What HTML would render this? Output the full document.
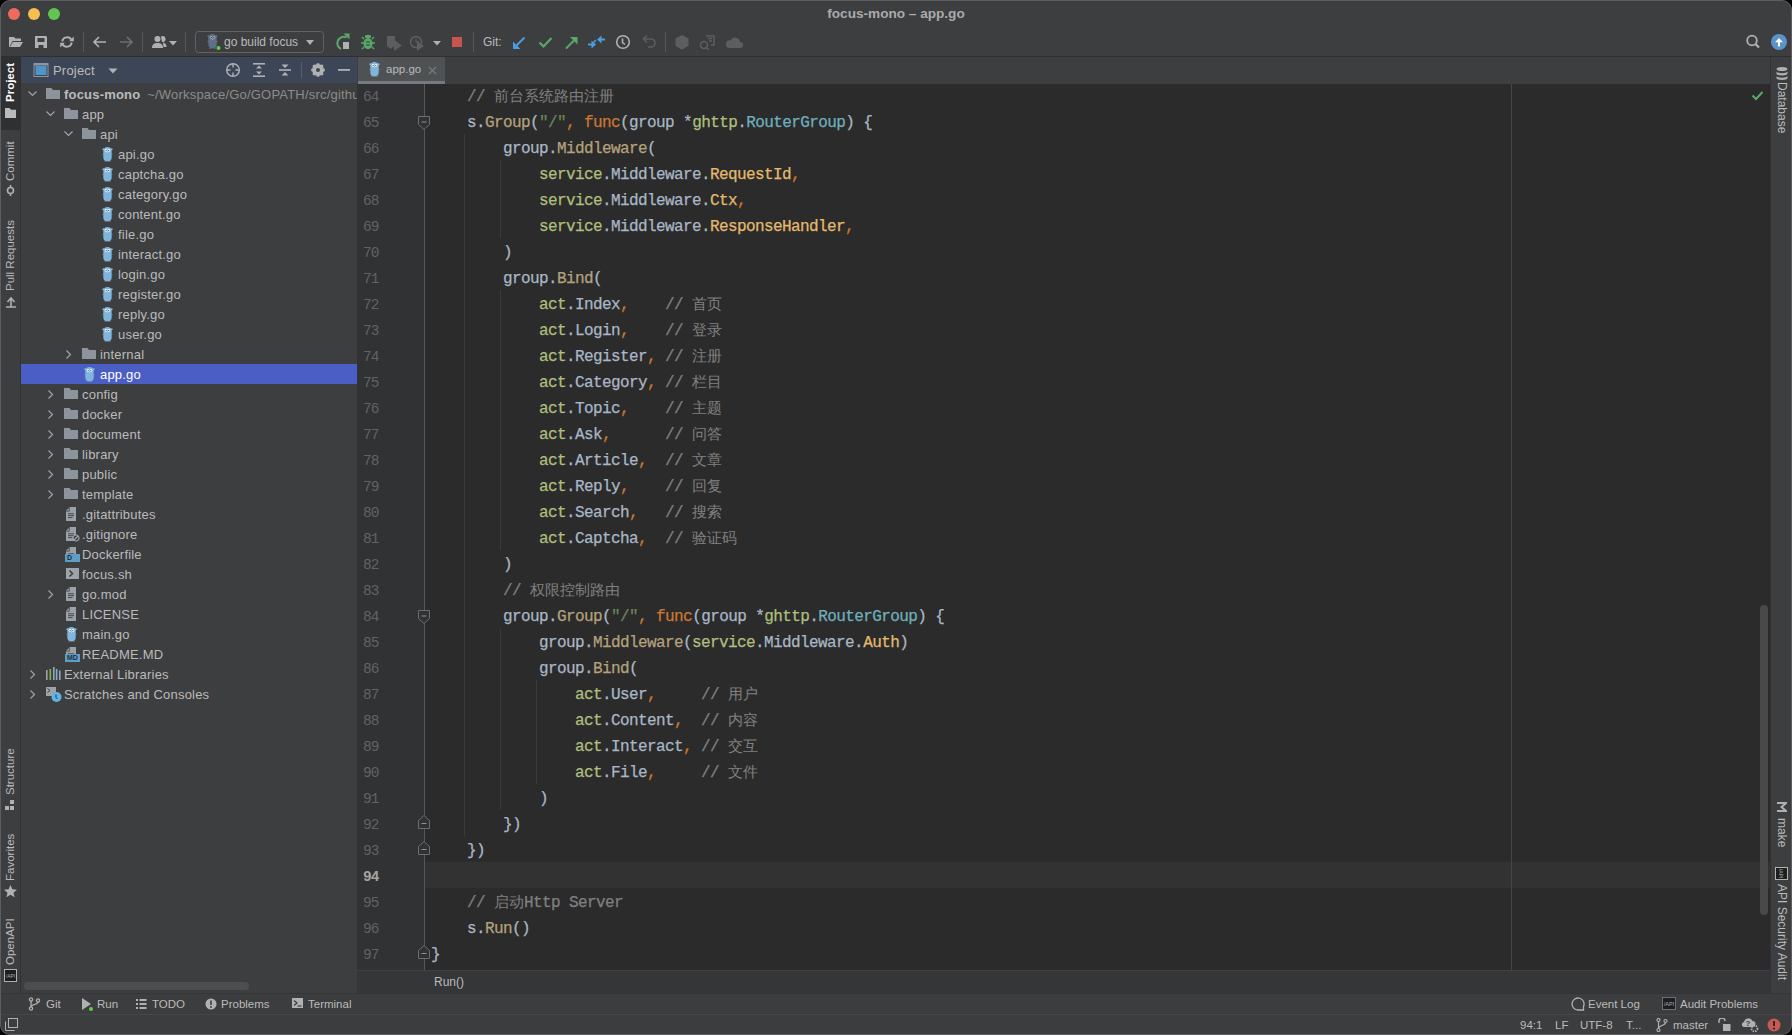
<!DOCTYPE html>
<html><head><meta charset="utf-8">
<style>
*{margin:0;padding:0;box-sizing:border-box}
html,body{width:1792px;height:1035px;overflow:hidden;background:#000}
body{font-family:"Liberation Sans",sans-serif;font-size:13px;color:#BBBBBB;position:relative}
.a{position:absolute}
#win{position:absolute;left:0;top:0;width:1792px;height:1035px;background:#3D3E40;border-radius:10px;overflow:hidden}
#title{left:0;top:0;width:1792px;height:28px;background:#3D3E40}
#tb{left:0;top:28px;width:1792px;height:29px;background:#3D3E40;border-bottom:1px solid #2E2F30}
#lstrip{left:0;top:57px;width:21px;height:937px;background:#3D3E40;border-right:1px solid #323232}
#rstrip{left:1770px;top:57px;width:22px;height:937px;background:#3D3E40;border-left:1px solid #323232}
#proj{left:21px;top:57px;width:336px;height:937px;background:#3D3E40}
#phead{left:21px;top:57px;width:336px;height:26px;background:#3D4656}
#tabs{left:357px;top:57px;width:1413px;height:27px;background:#3D3E40}
#gutter{left:357px;top:84px;width:68px;height:886px;background:#313234}
#editor{left:425px;top:84px;width:1345px;height:886px;background:#2B2B2B}
#crumb{left:357px;top:970px;width:1413px;height:23px;background:#343638;border-top:1px solid #3F4143}
#bbar{left:0;top:993px;width:1792px;height:21px;background:#3C3D3F;border-top:1px solid #343536}
#sbar{left:0;top:1014px;width:1792px;height:21px;background:#3C3D3F;border-top:1px solid #46474A}
.cjk{font-size:15px;-webkit-text-stroke:0;letter-spacing:0}
.code{font-family:"Liberation Mono",monospace;font-size:16px;letter-spacing:-0.6px;-webkit-text-stroke:0.25px currentColor;white-space:pre;color:#A9B7C6}
</style></head><body>
<svg width="0" height="0" style="position:absolute">
<defs>
<symbol id="folder" viewBox="0 0 14 11"><path d="M0 0h5.5l1.5 2H14v9H0z" fill="#8D949B"/></symbol>
<symbol id="gopher" viewBox="0 0 11 15">
<path d="M1.3 4C1.3 1.5 3.2 0 5.5 0S9.7 1.5 9.7 4V10.5C9.7 13.3 7.9 14.6 5.5 14.6S1.3 13.3 1.3 10.5z" fill="#7FB6E0"/>
<circle cx="1.4" cy="2.3" r="1.1" fill="#7FB6E0"/><circle cx="9.6" cy="2.3" r="1.1" fill="#7FB6E0"/>
<circle cx="4" cy="3.4" r="1.3" fill="#F0F4F8"/><circle cx="7" cy="3.4" r="1.3" fill="#F0F4F8"/>
<circle cx="4.2" cy="3.5" r=".55" fill="#333"/><circle cx="6.8" cy="3.5" r=".55" fill="#333"/>
<path d="M4.6 5h1.8l-.9.9z" fill="#D8C0A0"/>
<path d="M.6 7.5h.8M9.6 7.5h.8M2.6 14.6h.9M7.5 14.6h.9" stroke="#C98D5A" stroke-width=".8"/>
</symbol><symbol id="gopherdark" viewBox="0 0 11 15">
<path d="M1.3 4C1.3 1.5 3.2 0 5.5 0S9.7 1.5 9.7 4V10.5C9.7 13.3 7.9 14.6 5.5 14.6S1.3 13.3 1.3 10.5z" fill="#5E7088"/>
<circle cx="1.4" cy="2.3" r="1.1" fill="#5E7088"/><circle cx="9.6" cy="2.3" r="1.1" fill="#5E7088"/>
<circle cx="4" cy="3.4" r="1.3" fill="#9AA5B0"/><circle cx="7" cy="3.4" r="1.3" fill="#9AA5B0"/>
<circle cx="4.2" cy="3.5" r=".55" fill="#333"/><circle cx="6.8" cy="3.5" r=".55" fill="#333"/>
<path d="M4.6 5h1.8l-.9.9z" fill="#D8C0A0"/>
<path d="M.6 7.5h.8M9.6 7.5h.8M2.6 14.6h.9M7.5 14.6h.9" stroke="#C98D5A" stroke-width=".8"/>
</symbol>
<symbol id="chevd" viewBox="0 0 9 6"><path d="M.5 .5l4 4 4-4" fill="none" stroke="#A0A2A4" stroke-width="1.2"/></symbol>
<symbol id="chevr" viewBox="0 0 6 9"><path d="M.5 .5l4 4-4 4" fill="none" stroke="#A0A2A4" stroke-width="1.2"/></symbol>
<symbol id="textfile" viewBox="0 0 12 14"><path d="M4.6 0H11V14H1V4.6H4.6z" fill="#9AA1A8"/><path d="M1 3.8L3.8 1V3.8z" fill="#9AA1A8"/><path d="M3 6.8h6M3 8.7h6M3 10.6h4.5" stroke="#3D3E40" stroke-width=".9"/></symbol>
</defs></svg>

<div id="win">
<div class="a" id="title"></div>
<div class="a" id="tb"></div>
<div class="a" style="left:0;top:0;width:1792px;height:28px;text-align:center;line-height:28px;font-weight:bold;font-size:13.6px;color:#ABABAB">focus-mono – app.go</div>
<svg class="a" style="left:0;top:0" width="80" height="28">
<circle cx="14" cy="14" r="6" fill="#EC6A5E"/><circle cx="34" cy="14" r="6" fill="#F4BF4F"/><circle cx="54" cy="14" r="6" fill="#61C554"/>
</svg>
<svg class="a" style="left:0;top:28px" width="800" height="28">
<g fill="#AFB1B3">
<!-- open folder -->
<path d="M9 9h5l1.5 1.5H21V13H12.5L9.5 19H9z"/><path d="M12.8 14H23l-3 5H10z"/>
<!-- save -->
<path d="M35 8h11l1 1v11H35z M37.5 10v4h7v-4z M38.5 17h5v3h-5z" fill-rule="evenodd"/>
<!-- sync -->
</g>
<g fill="none" stroke="#AFB1B3" stroke-width="1.8"><path d="M62.2 13.5A5 5 0 0 1 71.5 11.8"/><path d="M71.8 14.5A5 5 0 0 1 62.5 16.2"/></g>
<g fill="#AFB1B3"><path d="M69.2 13.2h4.6V8.6z"/><path d="M64.8 14.8h-4.6v4.6z"/></g>
<g stroke="#555759" stroke-width="1"><path d="M83.5 4v20M142.5 4v20M185.5 4v20M473.5 4v20M665.5 4v20"/></g>
<!-- back/forward -->
<g fill="none" stroke="#AFB1B3" stroke-width="1.7"><path d="M94 14h12M99 9l-5 5 5 5"/></g>
<g fill="none" stroke="#6E6E6E" stroke-width="1.7"><path d="M120 14h12M127 9l5 5-5 5"/></g>
<!-- user -->
<g fill="#AFB1B3"><circle cx="157.5" cy="11" r="3"/><path d="M152 20c0-4 2.5-5 5.5-5s5.5 1 5.5 5z"/><path d="M161 8.5a3 3 0 1 1 1 5.5 M163 14.5c2 .5 3.5 1.5 3.5 4.5h-3"/><path d="M169 13h8l-4 4.5z"/></g>
<!-- run config box -->
<rect x="195.5" y="3.5" width="128" height="21" rx="3" fill="none" stroke="#606263"/>
<svg x="207" y="6" width="11" height="15" viewBox="0 0 11 15"><use href="#gopherdark"/></svg><circle cx="218.5" cy="20" r="2" fill="#5FD34A"/>
<path d="M306 12h8l-4 5z" fill="#AFB1B3"/>
<!-- rerun -->
<path d="M346.5 9.5A6 6 0 1 0 341 21" stroke="#59A869" stroke-width="2" fill="none"/><path d="M343.5 5.5h6v6z" fill="#59A869"/><rect x="343" y="14" width="6" height="7" fill="#AFB1B3"/>
<!-- debug -->
<g fill="#59A869"><ellipse cx="368" cy="15.5" rx="4.5" ry="5.5"/><path d="M362 9l2 2M374 9l-2 2M361 15h3M372 15h3M362 21l2-2M374 21l-2-2" stroke="#59A869" stroke-width="1.5"/><rect x="365" y="7" width="6" height="3" rx="1"/></g>
<path d="M366 14h4M366 17h4" stroke="#3D3E40" stroke-width="1"/>
<!-- coverage -->
<g fill="#5C5E60"><path d="M387 8h8v9l-4 4-4-3z"/><path d="M394 12l8 5.5-8 5.5z"/></g>
<!-- profile -->
<g fill="none" stroke="#5C5E60" stroke-width="1.6"><circle cx="416" cy="14" r="5.5"/></g><path d="M416 10v4h3" stroke="#5C5E60" fill="none"/><path d="M417 13l7 5-7 5z" fill="#5C5E60"/>
<path d="M433 13h8l-4 4.5z" fill="#AFB1B3"/>
<!-- stop -->
<rect x="452" y="9" width="10" height="10" fill="#C75450"/>

<!-- update -->
<path d="M524.5 9.5L515 19" stroke="#4D9BE0" stroke-width="2" fill="none"/><path d="M513 13.5V21h7.5z" fill="#4D9BE0"/>
<!-- commit -->
<path d="M539.5 14.5l4 4 8-8.5" stroke="#59A869" stroke-width="2.2" fill="none"/>
<!-- push -->
<path d="M566 20.5L575.5 11" stroke="#59A869" stroke-width="2" fill="none"/><path d="M570 9h7.5v7.5z" fill="#59A869"/>
<!-- merge -->
<g fill="#4D9BE0"><path d="M597 11.5l4.5-4v3h3.5v2h-3.5v3z"/><path d="M596 16.5l-4.5 4v-3H588v-2h3.5v-3z"/><path d="M596 12l-2.5 2.5M600 15.5" stroke="#4D9BE0" stroke-width="1.6"/></g>
<!-- history -->
<circle cx="623" cy="14" r="6.3" fill="none" stroke="#AFB1B3" stroke-width="1.6"/><path d="M622.5 10.5v4l2.5 2" stroke="#AFB1B3" stroke-width="1.6" fill="none"/>
<!-- rollback -->
<path d="M645 11h6a4 4 0 0 1 0 8h-3" stroke="#5C5E60" stroke-width="1.6" fill="none"/><path d="M647 7.5l-3.5 3.5 3.5 3.5" stroke="#5C5E60" stroke-width="1.6" fill="none"/>
<!-- hexagon -->
<path d="M682 7l6.5 3.5v7.5L682 21.5 675.5 18v-7.5z" fill="#5C5E60"/>
<!-- search in -->
<g stroke="#5C5E60" stroke-width="1.5" fill="none"><circle cx="704" cy="17" r="3.5"/><path d="M706.5 19.5l2.5 2.5"/><path d="M706 8h8v9h-3M708 10.5h4M709 13h3"/></g>
<!-- cloud -->
<path d="M729 20h11a3 3 0 0 0 0-6 5 5 0 0 0-9.5-1.5A3.8 3.8 0 0 0 729 20z" fill="#5C5E60"/>
</svg>
<div class="a" style="left:224px;top:28px;height:28px;line-height:28px;font-size:12px;color:#BBBBBB">go build focus</div>
<div class="a" style="left:483px;top:28px;height:28px;line-height:28px;font-size:12px;color:#BBBBBB">Git:</div>



<svg class="a" style="left:1740px;top:28px" width="52" height="28">
<circle cx="12" cy="12.5" r="4.8" fill="none" stroke="#AFB1B3" stroke-width="1.8"/><path d="M15.5 16l3.5 3.5" stroke="#AFB1B3" stroke-width="2.2"/>
<circle cx="39" cy="14" r="8" fill="#5B93C9"/><path d="M39 18.5v-5" stroke="#fff" stroke-width="2"/><path d="M35 14.2l4-4.2 4 4.2z" fill="#fff"/>
</svg>
<div class="a" id="lstrip"></div><div class="a" style="left:1px;top:57px;width:20px;height:73px;background:#2E3032"></div>
<div style="font-size:11.5px;color:#BBBBBB;white-space:nowrap;position:absolute;transform-origin:0 0;left:3px;top:102px;transform:rotate(-90deg);line-height:15px;height:15px;font-weight:bold;color:#FFFFFF">Project</div>
<svg class="a" style="left:5px;top:108px" width="12" height="11"><path d="M0 0h4.5l1.5 1.8H11V10H0z" fill="#BBBBBB"/></svg>
<div style="font-size:11.5px;color:#BBBBBB;white-space:nowrap;position:absolute;transform-origin:0 0;left:3px;top:181px;transform:rotate(-90deg);line-height:15px;height:15px;font-weight:normal;color:#BBBBBB">Commit</div>
<svg class="a" style="left:4px;top:185px" width="13" height="11"><circle cx="6.5" cy="5.5" r="3" fill="none" stroke="#AFB1B3" stroke-width="1.6"/><path d="M6.5 0v2.5M6.5 8.5V11" stroke="#AFB1B3" stroke-width="1.6"/></svg>
<div style="font-size:11.5px;color:#BBBBBB;white-space:nowrap;position:absolute;transform-origin:0 0;left:3px;top:291px;transform:rotate(-90deg);line-height:15px;height:15px;font-weight:normal;color:#BBBBBB">Pull Requests</div>
<svg class="a" style="left:5px;top:296px" width="12" height="12"><path d="M1 1v10M1 6h9M6 2.5L10 6 6 9.5" stroke="#AFB1B3" stroke-width="1.6" fill="none" transform="rotate(-90 6 6)"/></svg>
<div style="font-size:11.5px;color:#BBBBBB;white-space:nowrap;position:absolute;transform-origin:0 0;left:3px;top:795px;transform:rotate(-90deg);line-height:15px;height:15px;font-weight:normal;color:#BBBBBB">Structure</div>
<svg class="a" style="left:5px;top:800px" width="11" height="11"><rect x="5" y="0" width="4" height="4" fill="#AFB1B3"/><rect x="0" y="6" width="4" height="4" fill="#AFB1B3"/><rect x="5" y="6" width="4" height="4" fill="#AFB1B3"/></svg>
<div style="font-size:11.5px;color:#BBBBBB;white-space:nowrap;position:absolute;transform-origin:0 0;left:3px;top:881px;transform:rotate(-90deg);line-height:15px;height:15px;font-weight:normal;color:#BBBBBB">Favorites</div>
<svg class="a" style="left:4px;top:885px" width="13" height="13"><path d="M6.5 0l1.9 4.3 4.6.4-3.5 3 1.1 4.6-4.1-2.5-4.1 2.5 1.1-4.6-3.5-3 4.6-.4z" fill="#AFB1B3"/></svg>
<div style="font-size:11.5px;color:#BBBBBB;white-space:nowrap;position:absolute;transform-origin:0 0;left:3px;top:965px;transform:rotate(-90deg);line-height:15px;height:15px;font-weight:normal;color:#BBBBBB">OpenAPI</div>
<svg class="a" style="left:4px;top:969px" width="13" height="13"><rect x=".5" y=".5" width="12" height="12" fill="#1E1E1E" stroke="#AFB1B3"/><text x="6.5" y="9" font-size="5" fill="#AFB1B3" text-anchor="middle" font-family="Liberation Sans">/API</text></svg>
<div class="a" id="proj"></div>
<div class="a" id="phead"></div><div class="a" style="left:24px;top:982px;width:225px;height:8px;border-radius:4px;background:#4C4E50"></div>
<svg class="a" style="left:21px;top:57px" width="336" height="26">
<rect x="13" y="6.5" width="14" height="13" fill="none" stroke="#8B96A3" stroke-width="1"/><rect x="14.5" y="9" width="11" height="9" fill="#4D94C7"/><rect x="13" y="6.5" width="14" height="2" fill="#8B96A3"/>
<path d="M87.5 11.5h9l-4.5 5z" fill="#AFB1B3"/>
<g fill="none" stroke="#AFB1B3" stroke-width="1.4"><circle cx="212" cy="13" r="6.3"/><path d="M212 6.5v4M212 15.5v4M205.5 13h4M214.5 13h4"/></g>
<g fill="#AFB1B3"><rect x="232" y="6" width="12" height="1.6"/><rect x="232" y="18.4" width="12" height="1.6"/><path d="M238 8.5l3 3h-6z M238 17.5l3-3h-6z"/></g>
<g fill="#AFB1B3"><rect x="258" y="12.2" width="12" height="1.6"/><path d="M264 11l-3.5-3.5h7z M264 15l-3.5 3.5h7z"/></g>
<path d="M280.5 5v16" stroke="#55606C"/>
<g transform="translate(297 13)"><circle r="4.5" fill="none" stroke="#AFB1B3" stroke-width="3"/><g stroke="#AFB1B3" stroke-width="2.6"><path d="M0-6.8v13.6M-6.8 0h13.6M-4.8-4.8l9.6 9.6M4.8-4.8l-9.6 9.6"/></g><circle r="2" fill="#3E4654"/></g>
<rect x="317" y="12" width="12" height="1.8" fill="#AFB1B3"/>
</svg>
<div class="a" style="left:53px;top:58px;height:26px;line-height:26px;font-size:13px;letter-spacing:.2px;color:#BBBBBB">Project</div>
<div class="a" style="left:21px;top:83px;width:336px;height:910px;overflow:hidden"><div class="a" style="left:-21px;top:-83px;width:400px;height:1000px"><svg class="a" style="left:28px;top:91px" width="9" height="6"><use href="#chevd"/></svg>
<svg class="a" style="left:46px;top:88px" width="14" height="11"><use href="#folder"/></svg>
<div class="a" style="left:64px;top:85px;height:20px;line-height:20px;font-size:13px;letter-spacing:.2px;color:#BBBBBB;font-weight:bold;white-space:nowrap">focus-mono<span style="font-weight:normal;color:#8C8C8C;margin-left:3px"> ~/Workspace/Go/GOPATH/src/github.com/gogf/focus</span></div>
<svg class="a" style="left:46px;top:111px" width="9" height="6"><use href="#chevd"/></svg>
<svg class="a" style="left:64px;top:108px" width="14" height="11"><use href="#folder"/></svg>
<div class="a" style="left:82px;top:105px;height:20px;line-height:20px;font-size:13px;letter-spacing:.2px;color:#BBBBBB;font-weight:normal;white-space:nowrap">app</div>
<svg class="a" style="left:64px;top:131px" width="9" height="6"><use href="#chevd"/></svg>
<svg class="a" style="left:82px;top:128px" width="14" height="11"><use href="#folder"/></svg>
<div class="a" style="left:100px;top:125px;height:20px;line-height:20px;font-size:13px;letter-spacing:.2px;color:#BBBBBB;font-weight:normal;white-space:nowrap">api</div>
<svg class="a" style="left:102px;top:147px" width="11" height="15"><use href="#gopher"/></svg>
<div class="a" style="left:118px;top:145px;height:20px;line-height:20px;font-size:13px;letter-spacing:.2px;color:#BBBBBB;font-weight:normal;white-space:nowrap">api.go</div>
<svg class="a" style="left:102px;top:167px" width="11" height="15"><use href="#gopher"/></svg>
<div class="a" style="left:118px;top:165px;height:20px;line-height:20px;font-size:13px;letter-spacing:.2px;color:#BBBBBB;font-weight:normal;white-space:nowrap">captcha.go</div>
<svg class="a" style="left:102px;top:187px" width="11" height="15"><use href="#gopher"/></svg>
<div class="a" style="left:118px;top:185px;height:20px;line-height:20px;font-size:13px;letter-spacing:.2px;color:#BBBBBB;font-weight:normal;white-space:nowrap">category.go</div>
<svg class="a" style="left:102px;top:207px" width="11" height="15"><use href="#gopher"/></svg>
<div class="a" style="left:118px;top:205px;height:20px;line-height:20px;font-size:13px;letter-spacing:.2px;color:#BBBBBB;font-weight:normal;white-space:nowrap">content.go</div>
<svg class="a" style="left:102px;top:227px" width="11" height="15"><use href="#gopher"/></svg>
<div class="a" style="left:118px;top:225px;height:20px;line-height:20px;font-size:13px;letter-spacing:.2px;color:#BBBBBB;font-weight:normal;white-space:nowrap">file.go</div>
<svg class="a" style="left:102px;top:247px" width="11" height="15"><use href="#gopher"/></svg>
<div class="a" style="left:118px;top:245px;height:20px;line-height:20px;font-size:13px;letter-spacing:.2px;color:#BBBBBB;font-weight:normal;white-space:nowrap">interact.go</div>
<svg class="a" style="left:102px;top:267px" width="11" height="15"><use href="#gopher"/></svg>
<div class="a" style="left:118px;top:265px;height:20px;line-height:20px;font-size:13px;letter-spacing:.2px;color:#BBBBBB;font-weight:normal;white-space:nowrap">login.go</div>
<svg class="a" style="left:102px;top:287px" width="11" height="15"><use href="#gopher"/></svg>
<div class="a" style="left:118px;top:285px;height:20px;line-height:20px;font-size:13px;letter-spacing:.2px;color:#BBBBBB;font-weight:normal;white-space:nowrap">register.go</div>
<svg class="a" style="left:102px;top:307px" width="11" height="15"><use href="#gopher"/></svg>
<div class="a" style="left:118px;top:305px;height:20px;line-height:20px;font-size:13px;letter-spacing:.2px;color:#BBBBBB;font-weight:normal;white-space:nowrap">reply.go</div>
<svg class="a" style="left:102px;top:327px" width="11" height="15"><use href="#gopher"/></svg>
<div class="a" style="left:118px;top:325px;height:20px;line-height:20px;font-size:13px;letter-spacing:.2px;color:#BBBBBB;font-weight:normal;white-space:nowrap">user.go</div>
<svg class="a" style="left:66px;top:350px" width="6" height="9"><use href="#chevr"/></svg>
<svg class="a" style="left:82px;top:348px" width="14" height="11"><use href="#folder"/></svg>
<div class="a" style="left:100px;top:345px;height:20px;line-height:20px;font-size:13px;letter-spacing:.2px;color:#BBBBBB;font-weight:normal;white-space:nowrap">internal</div>
<div class="a" style="left:21px;top:364px;width:336px;height:20px;background:#4B5EC6"></div>
<svg class="a" style="left:84px;top:367px" width="11" height="15"><use href="#gopher"/></svg>
<div class="a" style="left:100px;top:365px;height:20px;line-height:20px;font-size:13px;letter-spacing:.2px;color:#FFFFFF;font-weight:normal;white-space:nowrap">app.go</div>
<svg class="a" style="left:48px;top:390px" width="6" height="9"><use href="#chevr"/></svg>
<svg class="a" style="left:64px;top:388px" width="14" height="11"><use href="#folder"/></svg>
<div class="a" style="left:82px;top:385px;height:20px;line-height:20px;font-size:13px;letter-spacing:.2px;color:#BBBBBB;font-weight:normal;white-space:nowrap">config</div>
<svg class="a" style="left:48px;top:410px" width="6" height="9"><use href="#chevr"/></svg>
<svg class="a" style="left:64px;top:408px" width="14" height="11"><use href="#folder"/></svg>
<div class="a" style="left:82px;top:405px;height:20px;line-height:20px;font-size:13px;letter-spacing:.2px;color:#BBBBBB;font-weight:normal;white-space:nowrap">docker</div>
<svg class="a" style="left:48px;top:430px" width="6" height="9"><use href="#chevr"/></svg>
<svg class="a" style="left:64px;top:428px" width="14" height="11"><use href="#folder"/></svg>
<div class="a" style="left:82px;top:425px;height:20px;line-height:20px;font-size:13px;letter-spacing:.2px;color:#BBBBBB;font-weight:normal;white-space:nowrap">document</div>
<svg class="a" style="left:48px;top:450px" width="6" height="9"><use href="#chevr"/></svg>
<svg class="a" style="left:64px;top:448px" width="14" height="11"><use href="#folder"/></svg>
<div class="a" style="left:82px;top:445px;height:20px;line-height:20px;font-size:13px;letter-spacing:.2px;color:#BBBBBB;font-weight:normal;white-space:nowrap">library</div>
<svg class="a" style="left:48px;top:470px" width="6" height="9"><use href="#chevr"/></svg>
<svg class="a" style="left:64px;top:468px" width="14" height="11"><use href="#folder"/></svg>
<div class="a" style="left:82px;top:465px;height:20px;line-height:20px;font-size:13px;letter-spacing:.2px;color:#BBBBBB;font-weight:normal;white-space:nowrap">public</div>
<svg class="a" style="left:48px;top:490px" width="6" height="9"><use href="#chevr"/></svg>
<svg class="a" style="left:64px;top:488px" width="14" height="11"><use href="#folder"/></svg>
<div class="a" style="left:82px;top:485px;height:20px;line-height:20px;font-size:13px;letter-spacing:.2px;color:#BBBBBB;font-weight:normal;white-space:nowrap">template</div>
<svg class="a" style="left:65px;top:507px" width="12" height="14"><use href="#textfile"/></svg>
<div class="a" style="left:82px;top:505px;height:20px;line-height:20px;font-size:13px;letter-spacing:.2px;color:#BBBBBB;font-weight:normal;white-space:nowrap">.gitattributes</div>
<svg class="a" style="left:65px;top:527px" width="12" height="14"><use href="#textfile"/></svg>
<svg class="a" style="left:72px;top:534px" width="8" height="8"><circle cx="4" cy="4" r="3" fill="#3D3E40" stroke="#9DA3A8" stroke-width="1.2"/><path d="M2 6l4-4" stroke="#9DA3A8" stroke-width="1.2"/></svg>
<div class="a" style="left:82px;top:525px;height:20px;line-height:20px;font-size:13px;letter-spacing:.2px;color:#BBBBBB;font-weight:normal;white-space:nowrap">.gitignore</div>
<svg class="a" style="left:65px;top:547px" width="12" height="14"><use href="#textfile"/></svg>
<div class="a" style="left:65px;top:554px;width:15px;height:8px;background:#5F9CC6;color:#1F2F3A;font-size:7px;line-height:8px;font-weight:bold;padding-left:2px">D</div>
<div class="a" style="left:82px;top:545px;height:20px;line-height:20px;font-size:13px;letter-spacing:.2px;color:#BBBBBB;font-weight:normal;white-space:nowrap">Dockerfile</div>
<svg class="a" style="left:66px;top:568px" width="14" height="12"><rect width="13" height="11" fill="#9DA3A8"/><path d="M3.5 2.5l3 3-3 3" stroke="#3D3E40" stroke-width="1.5" fill="none"/></svg>
<div class="a" style="left:82px;top:565px;height:20px;line-height:20px;font-size:13px;letter-spacing:.2px;color:#BBBBBB;font-weight:normal;white-space:nowrap">focus.sh</div>
<svg class="a" style="left:48px;top:590px" width="6" height="9"><use href="#chevr"/></svg>
<svg class="a" style="left:65px;top:587px" width="12" height="14"><use href="#textfile"/></svg>
<div class="a" style="left:82px;top:585px;height:20px;line-height:20px;font-size:13px;letter-spacing:.2px;color:#BBBBBB;font-weight:normal;white-space:nowrap">go.mod</div>
<svg class="a" style="left:65px;top:607px" width="12" height="14"><use href="#textfile"/></svg>
<div class="a" style="left:82px;top:605px;height:20px;line-height:20px;font-size:13px;letter-spacing:.2px;color:#BBBBBB;font-weight:normal;white-space:nowrap">LICENSE</div>
<svg class="a" style="left:66px;top:627px" width="11" height="15"><use href="#gopher"/></svg>
<div class="a" style="left:82px;top:625px;height:20px;line-height:20px;font-size:13px;letter-spacing:.2px;color:#BBBBBB;font-weight:normal;white-space:nowrap">main.go</div>
<svg class="a" style="left:65px;top:647px" width="12" height="14"><use href="#textfile"/></svg>
<div class="a" style="left:65px;top:654px;width:15px;height:8px;background:#5F9CC6;color:#1F2F3A;font-size:7px;line-height:8px;font-weight:bold;padding-left:2px">MD</div>
<div class="a" style="left:82px;top:645px;height:20px;line-height:20px;font-size:13px;letter-spacing:.2px;color:#BBBBBB;font-weight:normal;white-space:nowrap">README.MD</div>
<svg class="a" style="left:30px;top:670px" width="6" height="9"><use href="#chevr"/></svg>
<svg class="a" style="left:46px;top:667px" width="15" height="13"><rect x="0" y="3" width="1.6" height="10" fill="#9DA3A8"/><rect x="3.5" y="2" width="1.6" height="11" fill="#78B848"/><rect x="7" y="0" width="1.6" height="13" fill="#9DA3A8"/><rect x="9.8" y="2" width="1.6" height="11" fill="#6EB3E5"/><rect x="13" y="3.5" width="1.6" height="9.5" fill="#9DA3A8"/></svg>
<div class="a" style="left:64px;top:665px;height:20px;line-height:20px;font-size:13px;letter-spacing:.2px;color:#BBBBBB;font-weight:normal;white-space:nowrap">External Libraries</div>
<svg class="a" style="left:30px;top:690px" width="6" height="9"><use href="#chevr"/></svg>
<svg class="a" style="left:46px;top:687px" width="16" height="16"><rect x="0" y="0" width="10" height="9" fill="#9DA3A8"/><path d="M1.5 1.5l2.5 2-2.5 2" stroke="#3D3E40" fill="none"/><circle cx="10.5" cy="10" r="5" fill="#5FB4E5"/><path d="M10 7.5v3l1.5 1.5" stroke="#2B3B46" fill="none"/></svg>
<div class="a" style="left:64px;top:685px;height:20px;line-height:20px;font-size:13px;letter-spacing:.2px;color:#BBBBBB;font-weight:normal;white-space:nowrap">Scratches and Consoles</div></div></div>
<div class="a" id="tabs"></div>
<div class="a" style="left:358px;top:57px;width:87px;height:27px;background:#4E5254"></div>
<div class="a" style="left:358px;top:81px;width:87px;height:3px;background:#747A80"></div>
<svg class="a" style="left:369px;top:62px" width="11" height="15"><use href="#gopher"/></svg>
<div class="a" style="left:386px;top:57px;height:25px;line-height:25px;font-size:11.5px;color:#BBBBBB">app.go</div>
<svg class="a" style="left:428px;top:66px" width="9" height="9"><path d="M1 1l7 7M8 1L1 8" stroke="#7A7C7E" stroke-width="1.1"/></svg>

<div class="a" id="gutter"></div>
<div class="a" id="editor"></div><div class="a" style="left:357px;top:84px;width:1413px;height:886px;overflow:hidden"><div class="a" style="left:-357px;top:-84px;width:1792px;height:1035px"><div class="a" style="left:425px;top:862px;width:1345px;height:26px;background:#323232"></div>
<div class="a" style="left:1511px;top:84px;width:1px;height:886px;background:#444546"></div>
<div class="a" style="left:464px;top:134px;width:1px;height:702px;background:#393B3B"></div>
<div class="a" style="left:500px;top:160px;width:1px;height:78px;background:#393B3B"></div>
<div class="a" style="left:500px;top:290px;width:1px;height:260px;background:#393B3B"></div>
<div class="a" style="left:500px;top:628px;width:1px;height:182px;background:#393B3B"></div>
<div class="a" style="left:536px;top:680px;width:1px;height:104px;background:#393B3B"></div>
<div class="a code" style="left:431px;top:84px;height:26px;line-height:26px">    <span style="color:#808080">// <span class="cjk">前台系统路由注册</span></span></div>
<div class="a" style="left:363px;top:84px;height:26px;line-height:26px;font-family:'Liberation Mono';font-size:14.5px;letter-spacing:-0.9px;color:#606366">64</div>
<div class="a code" style="left:431px;top:110px;height:26px;line-height:26px">    s.<span style="color:#B4A27D">Group</span>(<span style="color:#6A8759">"/"</span><span style="color:#CC7832">,</span> <span style="color:#CC7832">func</span>(group *<span style="color:#AFBF7E">ghttp</span>.<span style="color:#6FAFBD">RouterGroup</span>) {</div>
<div class="a" style="left:363px;top:110px;height:26px;line-height:26px;font-family:'Liberation Mono';font-size:14.5px;letter-spacing:-0.9px;color:#606366">65</div>
<div class="a code" style="left:431px;top:136px;height:26px;line-height:26px">        group.<span style="color:#B4A27D">Middleware</span>(</div>
<div class="a" style="left:363px;top:136px;height:26px;line-height:26px;font-family:'Liberation Mono';font-size:14.5px;letter-spacing:-0.9px;color:#606366">66</div>
<div class="a code" style="left:431px;top:162px;height:26px;line-height:26px">            <span style="color:#AFBF7E">service</span>.Middleware.<span style="color:#E3BA6E">RequestId</span><span style="color:#CC7832">,</span></div>
<div class="a" style="left:363px;top:162px;height:26px;line-height:26px;font-family:'Liberation Mono';font-size:14.5px;letter-spacing:-0.9px;color:#606366">67</div>
<div class="a code" style="left:431px;top:188px;height:26px;line-height:26px">            <span style="color:#AFBF7E">service</span>.Middleware.<span style="color:#E3BA6E">Ctx</span><span style="color:#CC7832">,</span></div>
<div class="a" style="left:363px;top:188px;height:26px;line-height:26px;font-family:'Liberation Mono';font-size:14.5px;letter-spacing:-0.9px;color:#606366">68</div>
<div class="a code" style="left:431px;top:214px;height:26px;line-height:26px">            <span style="color:#AFBF7E">service</span>.Middleware.<span style="color:#E3BA6E">ResponseHandler</span><span style="color:#CC7832">,</span></div>
<div class="a" style="left:363px;top:214px;height:26px;line-height:26px;font-family:'Liberation Mono';font-size:14.5px;letter-spacing:-0.9px;color:#606366">69</div>
<div class="a code" style="left:431px;top:240px;height:26px;line-height:26px">        )</div>
<div class="a" style="left:363px;top:240px;height:26px;line-height:26px;font-family:'Liberation Mono';font-size:14.5px;letter-spacing:-0.9px;color:#606366">70</div>
<div class="a code" style="left:431px;top:266px;height:26px;line-height:26px">        group.<span style="color:#B4A27D">Bind</span>(</div>
<div class="a" style="left:363px;top:266px;height:26px;line-height:26px;font-family:'Liberation Mono';font-size:14.5px;letter-spacing:-0.9px;color:#606366">71</div>
<div class="a code" style="left:431px;top:292px;height:26px;line-height:26px">            <span style="color:#AFBF7E">act</span>.Index<span style="color:#CC7832">,</span>    <span style="color:#808080">// <span class="cjk">首页</span></span></div>
<div class="a" style="left:363px;top:292px;height:26px;line-height:26px;font-family:'Liberation Mono';font-size:14.5px;letter-spacing:-0.9px;color:#606366">72</div>
<div class="a code" style="left:431px;top:318px;height:26px;line-height:26px">            <span style="color:#AFBF7E">act</span>.Login<span style="color:#CC7832">,</span>    <span style="color:#808080">// <span class="cjk">登录</span></span></div>
<div class="a" style="left:363px;top:318px;height:26px;line-height:26px;font-family:'Liberation Mono';font-size:14.5px;letter-spacing:-0.9px;color:#606366">73</div>
<div class="a code" style="left:431px;top:344px;height:26px;line-height:26px">            <span style="color:#AFBF7E">act</span>.Register<span style="color:#CC7832">,</span> <span style="color:#808080">// <span class="cjk">注册</span></span></div>
<div class="a" style="left:363px;top:344px;height:26px;line-height:26px;font-family:'Liberation Mono';font-size:14.5px;letter-spacing:-0.9px;color:#606366">74</div>
<div class="a code" style="left:431px;top:370px;height:26px;line-height:26px">            <span style="color:#AFBF7E">act</span>.Category<span style="color:#CC7832">,</span> <span style="color:#808080">// <span class="cjk">栏目</span></span></div>
<div class="a" style="left:363px;top:370px;height:26px;line-height:26px;font-family:'Liberation Mono';font-size:14.5px;letter-spacing:-0.9px;color:#606366">75</div>
<div class="a code" style="left:431px;top:396px;height:26px;line-height:26px">            <span style="color:#AFBF7E">act</span>.Topic<span style="color:#CC7832">,</span>    <span style="color:#808080">// <span class="cjk">主题</span></span></div>
<div class="a" style="left:363px;top:396px;height:26px;line-height:26px;font-family:'Liberation Mono';font-size:14.5px;letter-spacing:-0.9px;color:#606366">76</div>
<div class="a code" style="left:431px;top:422px;height:26px;line-height:26px">            <span style="color:#AFBF7E">act</span>.Ask<span style="color:#CC7832">,</span>      <span style="color:#808080">// <span class="cjk">问答</span></span></div>
<div class="a" style="left:363px;top:422px;height:26px;line-height:26px;font-family:'Liberation Mono';font-size:14.5px;letter-spacing:-0.9px;color:#606366">77</div>
<div class="a code" style="left:431px;top:448px;height:26px;line-height:26px">            <span style="color:#AFBF7E">act</span>.Article<span style="color:#CC7832">,</span>  <span style="color:#808080">// <span class="cjk">文章</span></span></div>
<div class="a" style="left:363px;top:448px;height:26px;line-height:26px;font-family:'Liberation Mono';font-size:14.5px;letter-spacing:-0.9px;color:#606366">78</div>
<div class="a code" style="left:431px;top:474px;height:26px;line-height:26px">            <span style="color:#AFBF7E">act</span>.Reply<span style="color:#CC7832">,</span>    <span style="color:#808080">// <span class="cjk">回复</span></span></div>
<div class="a" style="left:363px;top:474px;height:26px;line-height:26px;font-family:'Liberation Mono';font-size:14.5px;letter-spacing:-0.9px;color:#606366">79</div>
<div class="a code" style="left:431px;top:500px;height:26px;line-height:26px">            <span style="color:#AFBF7E">act</span>.Search<span style="color:#CC7832">,</span>   <span style="color:#808080">// <span class="cjk">搜索</span></span></div>
<div class="a" style="left:363px;top:500px;height:26px;line-height:26px;font-family:'Liberation Mono';font-size:14.5px;letter-spacing:-0.9px;color:#606366">80</div>
<div class="a code" style="left:431px;top:526px;height:26px;line-height:26px">            <span style="color:#AFBF7E">act</span>.Captcha<span style="color:#CC7832">,</span>  <span style="color:#808080">// <span class="cjk">验证码</span></span></div>
<div class="a" style="left:363px;top:526px;height:26px;line-height:26px;font-family:'Liberation Mono';font-size:14.5px;letter-spacing:-0.9px;color:#606366">81</div>
<div class="a code" style="left:431px;top:552px;height:26px;line-height:26px">        )</div>
<div class="a" style="left:363px;top:552px;height:26px;line-height:26px;font-family:'Liberation Mono';font-size:14.5px;letter-spacing:-0.9px;color:#606366">82</div>
<div class="a code" style="left:431px;top:578px;height:26px;line-height:26px">        <span style="color:#808080">// <span class="cjk">权限控制路由</span></span></div>
<div class="a" style="left:363px;top:578px;height:26px;line-height:26px;font-family:'Liberation Mono';font-size:14.5px;letter-spacing:-0.9px;color:#606366">83</div>
<div class="a code" style="left:431px;top:604px;height:26px;line-height:26px">        group.<span style="color:#B4A27D">Group</span>(<span style="color:#6A8759">"/"</span><span style="color:#CC7832">,</span> <span style="color:#CC7832">func</span>(group *<span style="color:#AFBF7E">ghttp</span>.<span style="color:#6FAFBD">RouterGroup</span>) {</div>
<div class="a" style="left:363px;top:604px;height:26px;line-height:26px;font-family:'Liberation Mono';font-size:14.5px;letter-spacing:-0.9px;color:#606366">84</div>
<div class="a code" style="left:431px;top:630px;height:26px;line-height:26px">            group.<span style="color:#B4A27D">Middleware</span>(<span style="color:#AFBF7E">service</span>.Middleware.<span style="color:#E3BA6E">Auth</span>)</div>
<div class="a" style="left:363px;top:630px;height:26px;line-height:26px;font-family:'Liberation Mono';font-size:14.5px;letter-spacing:-0.9px;color:#606366">85</div>
<div class="a code" style="left:431px;top:656px;height:26px;line-height:26px">            group.<span style="color:#B4A27D">Bind</span>(</div>
<div class="a" style="left:363px;top:656px;height:26px;line-height:26px;font-family:'Liberation Mono';font-size:14.5px;letter-spacing:-0.9px;color:#606366">86</div>
<div class="a code" style="left:431px;top:682px;height:26px;line-height:26px">                <span style="color:#AFBF7E">act</span>.User<span style="color:#CC7832">,</span>     <span style="color:#808080">// <span class="cjk">用户</span></span></div>
<div class="a" style="left:363px;top:682px;height:26px;line-height:26px;font-family:'Liberation Mono';font-size:14.5px;letter-spacing:-0.9px;color:#606366">87</div>
<div class="a code" style="left:431px;top:708px;height:26px;line-height:26px">                <span style="color:#AFBF7E">act</span>.Content<span style="color:#CC7832">,</span>  <span style="color:#808080">// <span class="cjk">内容</span></span></div>
<div class="a" style="left:363px;top:708px;height:26px;line-height:26px;font-family:'Liberation Mono';font-size:14.5px;letter-spacing:-0.9px;color:#606366">88</div>
<div class="a code" style="left:431px;top:734px;height:26px;line-height:26px">                <span style="color:#AFBF7E">act</span>.Interact<span style="color:#CC7832">,</span> <span style="color:#808080">// <span class="cjk">交互</span></span></div>
<div class="a" style="left:363px;top:734px;height:26px;line-height:26px;font-family:'Liberation Mono';font-size:14.5px;letter-spacing:-0.9px;color:#606366">89</div>
<div class="a code" style="left:431px;top:760px;height:26px;line-height:26px">                <span style="color:#AFBF7E">act</span>.File<span style="color:#CC7832">,</span>     <span style="color:#808080">// <span class="cjk">文件</span></span></div>
<div class="a" style="left:363px;top:760px;height:26px;line-height:26px;font-family:'Liberation Mono';font-size:14.5px;letter-spacing:-0.9px;color:#606366">90</div>
<div class="a code" style="left:431px;top:786px;height:26px;line-height:26px">            )</div>
<div class="a" style="left:363px;top:786px;height:26px;line-height:26px;font-family:'Liberation Mono';font-size:14.5px;letter-spacing:-0.9px;color:#606366">91</div>
<div class="a code" style="left:431px;top:812px;height:26px;line-height:26px">        })</div>
<div class="a" style="left:363px;top:812px;height:26px;line-height:26px;font-family:'Liberation Mono';font-size:14.5px;letter-spacing:-0.9px;color:#606366">92</div>
<div class="a code" style="left:431px;top:838px;height:26px;line-height:26px">    })</div>
<div class="a" style="left:363px;top:838px;height:26px;line-height:26px;font-family:'Liberation Mono';font-size:14.5px;letter-spacing:-0.9px;color:#606366">93</div>
<div class="a code" style="left:431px;top:864px;height:26px;line-height:26px"></div>
<div class="a" style="left:363px;top:864px;height:26px;line-height:26px;font-family:'Liberation Mono';font-size:14.5px;letter-spacing:-0.9px;color:#A4A3A3;font-weight:bold">94</div>
<div class="a code" style="left:431px;top:890px;height:26px;line-height:26px">    <span style="color:#808080">// <span class="cjk">启动</span>Http Server</span></div>
<div class="a" style="left:363px;top:890px;height:26px;line-height:26px;font-family:'Liberation Mono';font-size:14.5px;letter-spacing:-0.9px;color:#606366">95</div>
<div class="a code" style="left:431px;top:916px;height:26px;line-height:26px">    s.<span style="color:#B4A27D">Run</span>()</div>
<div class="a" style="left:363px;top:916px;height:26px;line-height:26px;font-family:'Liberation Mono';font-size:14.5px;letter-spacing:-0.9px;color:#606366">96</div>
<div class="a code" style="left:431px;top:942px;height:26px;line-height:26px">}</div>
<div class="a" style="left:363px;top:942px;height:26px;line-height:26px;font-family:'Liberation Mono';font-size:14.5px;letter-spacing:-0.9px;color:#606366">97</div>
<div class="a" style="left:424px;top:84px;width:1px;height:886px;background:#555759"></div>
<svg class="a" style="left:418px;top:116px" width="13" height="15"><path d="M.5 .5h11v8l-5.5 5-5.5-5z" fill="#313234" stroke="#6B6D6F"/><path d="M3.5 6h5" stroke="#8E9092"/></svg>
<svg class="a" style="left:418px;top:610px" width="13" height="15"><path d="M.5 .5h11v8l-5.5 5-5.5-5z" fill="#313234" stroke="#6B6D6F"/><path d="M3.5 6h5" stroke="#8E9092"/></svg>
<svg class="a" style="left:418px;top:815px" width="13" height="15"><path d="M.5 13.5h11v-8l-5.5-5-5.5 5z" fill="#313234" stroke="#6B6D6F"/><path d="M3.5 8.5h5" stroke="#8E9092"/></svg>
<svg class="a" style="left:418px;top:841px" width="13" height="15"><path d="M.5 13.5h11v-8l-5.5-5-5.5 5z" fill="#313234" stroke="#6B6D6F"/><path d="M3.5 8.5h5" stroke="#8E9092"/></svg>
<svg class="a" style="left:418px;top:945px" width="13" height="15"><path d="M.5 13.5h11v-8l-5.5-5-5.5 5z" fill="#313234" stroke="#6B6D6F"/><path d="M3.5 8.5h5" stroke="#8E9092"/></svg>
<svg class="a" style="left:1751px;top:90px" width="13" height="11"><path d="M1.5 5.5l3.5 3.5 6.5-7" stroke="#59A869" stroke-width="2" fill="none"/></svg>
<div class="a" style="left:1760px;top:605px;width:8px;height:310px;background:#494949;border-radius:4px"></div></div></div>
<div class="a" id="rstrip"></div><svg class="a" style="left:1776px;top:67px" width="12" height="13"><g fill="#AFB1B3"><ellipse cx="6" cy="2" rx="5.5" ry="2"/><path d="M.5 4.2c0 1.2 2.5 2 5.5 2s5.5-.8 5.5-2v2.2c0 1.2-2.5 2-5.5 2S.5 7.6.5 6.4z"/><path d="M.5 8.7c0 1.2 2.5 2 5.5 2s5.5-.8 5.5-2v2.2c0 1.2-2.5 2-5.5 2S.5 12.1.5 10.9z"/></g></svg>
<div style="font-size:11.5px;color:#BBBBBB;white-space:nowrap;position:absolute;transform-origin:0 0;left:1789px;top:82px;transform:rotate(90deg);line-height:15px;height:15px;font-size:12px">Database</div>
<svg class="a" style="left:1776px;top:802px" width="11" height="10"><path d="M1 1h9L5.5 5 10 9H1" stroke="#AFB1B3" stroke-width="2" fill="none" stroke-linejoin="miter"/></svg>
<div style="font-size:11.5px;color:#BBBBBB;white-space:nowrap;position:absolute;transform-origin:0 0;left:1789px;top:818px;transform:rotate(90deg);line-height:15px;height:15px;font-size:12px">make</div>
<svg class="a" style="left:1775px;top:867px" width="13" height="13"><rect x=".5" y=".5" width="12" height="12" fill="#1E1E1E" stroke="#AFB1B3"/><text x="6.5" y="9" font-size="5" fill="#AFB1B3" text-anchor="middle" font-family="Liberation Sans" transform="rotate(90 6.5 6.5)">/API</text></svg>
<div style="font-size:11.5px;color:#BBBBBB;white-space:nowrap;position:absolute;transform-origin:0 0;left:1789px;top:884px;transform:rotate(90deg);line-height:15px;height:15px;font-size:12px">API Security Audit</div>
<div class="a" id="crumb"></div><div class="a" style="left:434px;top:971px;height:23px;line-height:23px;font-size:12px;color:#BBBBBB">Run()</div>
<div class="a" id="bbar"></div>
<svg class="a" style="left:28px;top:997px" width="14" height="14"><circle cx="3" cy="2.5" r="1.6" fill="none" stroke="#AFB1B3" stroke-width="1.3"/><circle cx="3" cy="11.5" r="1.6" fill="none" stroke="#AFB1B3" stroke-width="1.3"/><circle cx="10" cy="3.5" r="1.6" fill="none" stroke="#AFB1B3" stroke-width="1.3"/><path d="M3 4v6M10 5c0 3-7 2-7 5" stroke="#AFB1B3" stroke-width="1.3" fill="none"/></svg>
<div class="a" style="left:46px;top:994px;height:20px;line-height:20px;font-size:11.5px;color:#BBBBBB">Git</div>
<svg class="a" style="left:81px;top:998px" width="14" height="14"><path d="M1 0l9 6-9 6z" fill="#AFB1B3"/><circle cx="10" cy="11" r="2" fill="#5FD34A"/></svg>
<div class="a" style="left:97px;top:994px;height:20px;line-height:20px;font-size:11.5px;color:#BBBBBB">Run</div>
<svg class="a" style="left:136px;top:999px" width="11" height="10"><g fill="#AFB1B3"><rect x="0" y="0" width="2" height="2"/><rect x="0" y="4" width="2" height="2"/><rect x="0" y="8" width="2" height="2"/><rect x="3.5" y="0" width="7" height="2"/><rect x="3.5" y="4" width="7" height="2"/><rect x="3.5" y="8" width="7" height="2"/></g></svg>
<div class="a" style="left:152px;top:994px;height:20px;line-height:20px;font-size:11.5px;color:#BBBBBB">TODO</div>
<svg class="a" style="left:205px;top:998px" width="12" height="12"><circle cx="6" cy="6" r="5.5" fill="#AFB1B3"/><path d="M6 2.5v4.5" stroke="#3D3E40" stroke-width="1.6"/><circle cx="6" cy="9" r=".9" fill="#3D3E40"/></svg>
<div class="a" style="left:221px;top:994px;height:20px;line-height:20px;font-size:11.5px;color:#BBBBBB">Problems</div>
<svg class="a" style="left:292px;top:998px" width="12" height="11"><rect width="11" height="10" fill="#AFB1B3"/><path d="M2 2.5l3 2.5-3 2.5" stroke="#3D3E40" stroke-width="1.3" fill="none"/><path d="M5.5 8h4" stroke="#3D3E40" stroke-width="1.2"/></svg>
<div class="a" style="left:308px;top:994px;height:20px;line-height:20px;font-size:11.5px;color:#BBBBBB">Terminal</div>
<svg class="a" style="left:1571px;top:997px" width="14" height="14"><path d="M12.5 13H7a6 6 0 1 1 5.5-3.5z" fill="none" stroke="#AFB1B3" stroke-width="1.3"/></svg>
<div class="a" style="left:1588px;top:994px;height:20px;line-height:20px;font-size:11.5px;color:#BBBBBB">Event Log</div>
<svg class="a" style="left:1662px;top:997px" width="14" height="13"><rect x=".5" y=".5" width="13" height="12" fill="#1E1E1E" stroke="#707070"/><text x="7" y="9" font-size="5.5" fill="#AFB1B3" text-anchor="middle" font-family="Liberation Sans">/API</text></svg>
<div class="a" style="left:1680px;top:994px;height:20px;line-height:20px;font-size:11.5px;color:#BBBBBB">Audit Problems</div>

<div class="a" id="sbar"></div>
<svg class="a" style="left:5px;top:1018px" width="13" height="13"><rect x="3.5" y=".5" width="9" height="9" fill="none" stroke="#AFB1B3"/><path d="M.5 3.5v9h9" fill="none" stroke="#AFB1B3"/></svg>
<div class="a" style="left:1520px;top:1015px;height:21px;line-height:21px;font-size:11.5px;color:#BBBBBB">94:1</div>
<div class="a" style="left:1555px;top:1015px;height:21px;line-height:21px;font-size:11.5px;color:#BBBBBB">LF</div>
<div class="a" style="left:1580px;top:1015px;height:21px;line-height:21px;font-size:11.5px;color:#BBBBBB">UTF-8</div>
<div class="a" style="left:1626px;top:1015px;height:21px;line-height:21px;font-size:11.5px;color:#BBBBBB">T...</div>
<svg class="a" style="left:1656px;top:1018px" width="12" height="14"><circle cx="2.5" cy="2" r="1.5" fill="none" stroke="#AFB1B3" stroke-width="1.2"/><circle cx="2.5" cy="12" r="1.5" fill="none" stroke="#AFB1B3" stroke-width="1.2"/><circle cx="9.5" cy="3" r="1.5" fill="none" stroke="#AFB1B3" stroke-width="1.2"/><path d="M2.5 3.5v7M9.5 4.5c0 3.5-7 2.5-7 6" stroke="#AFB1B3" stroke-width="1.2" fill="none"/></svg>
<div class="a" style="left:1673px;top:1015px;height:21px;line-height:21px;font-size:11.5px;color:#BBBBBB">master</div>
<svg class="a" style="left:1718px;top:1018px" width="13" height="14"><path d="M1 5V3a3 3 0 0 1 6 0" fill="none" stroke="#AFB1B3" stroke-width="1.4"/><rect x="5" y="6" width="7.5" height="7" fill="#AFB1B3"/></svg>
<svg class="a" style="left:1741px;top:1016px" width="18" height="17"><path d="M2.5 11h9a3 3 0 0 0 0-6A4.5 4.5 0 0 0 3 6a2.6 2.6 0 0 0-.5 5z" fill="#AFB1B3"/><text x="7" y="9.5" font-size="8" font-weight="bold" fill="#3D3E40" font-family="Liberation Sans" text-anchor="middle">?</text><circle cx="13.5" cy="12.5" r="3" fill="none" stroke="#AFB1B3" stroke-width="1.8" stroke-dasharray="1.5 1"/></svg>
<svg class="a" style="left:1767px;top:1018px" width="14" height="14"><circle cx="7" cy="7" r="6.5" fill="#C75A52"/><path d="M7 3v5" stroke="#2B2B2B" stroke-width="2"/><circle cx="7" cy="10.6" r="1.1" fill="#2B2B2B"/></svg>

<div class="a" style="left:0;top:0;width:1792px;height:1035px;border:1px solid #5E5E5E;border-radius:10px;pointer-events:none"></div>
</div>
</body></html>
